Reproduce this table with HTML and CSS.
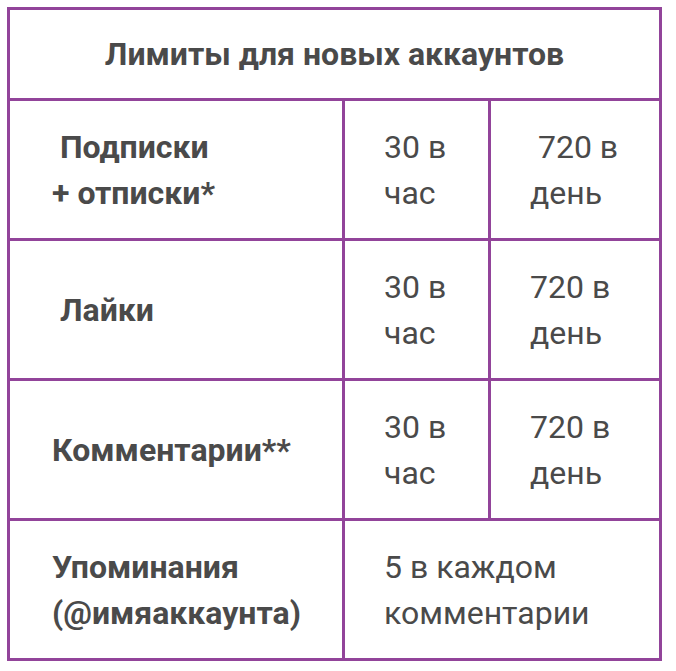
FILE: index.html
```html
<!DOCTYPE html>
<html lang="ru">
<head>
<meta charset="utf-8">
<title>Лимиты для новых аккаунтов</title>
<link rel="stylesheet" href="styles.css">
</head>
<body>
<div class="page">
  <div class="limits">
    <div class="cell head">Лимиты для новых аккаунтов</div>

    <div class="cell name">&nbsp;Подписки<br>+ отписки*</div>
    <div class="cell val">30 в<br>час</div>
    <div class="cell val">&nbsp;720 в<br>день</div>

    <div class="cell name">&nbsp;Лайки</div>
    <div class="cell val">30 в<br>час</div>
    <div class="cell val">720 в<br>день</div>

    <div class="cell name">Комментарии**</div>
    <div class="cell val">30 в<br>час</div>
    <div class="cell val">720 в<br>день</div>

    <div class="cell name">Упоминания<br>(@имяаккаунта)</div>
    <div class="cell val wide">5 в каждом<br>комментарии</div>
  </div>
</div>
</body>
</html>
```

FILE: styles.css
```css
html, body {
  margin: 0;
  padding: 0;
  background: #ffffff;
}

.page {
  padding: 7px;
  width: 662px;
  box-sizing: border-box;
}

.limits {
  display: grid;
  grid-template-columns: 332px 143px 168px;
  grid-template-rows: 88px repeat(4, 137px);
  gap: 3px;
  padding: 3px;
  background: #92449a;
  width: 655px;
  box-sizing: border-box;
  font-family: Roboto, "Noto Sans", sans-serif;
  color: #4a4a4a;
}

.cell {
  background: #ffffff;
  display: flex;
  flex-direction: column;
  justify-content: center;
  font-size: 32px;
  line-height: 46px;
  padding-left: 40px;
}

.head {
  grid-column: 1 / -1;
  padding-left: 0;
  align-items: center;
  text-align: center;
  font-weight: 700;
  font-size: 32px;
}

.name {
  font-weight: 700;
  padding-left: 42px;
}

.val {
  font-weight: 400;
  padding-left: 39px;
}

.wide {
  grid-column: 2 / 4;
}
```
